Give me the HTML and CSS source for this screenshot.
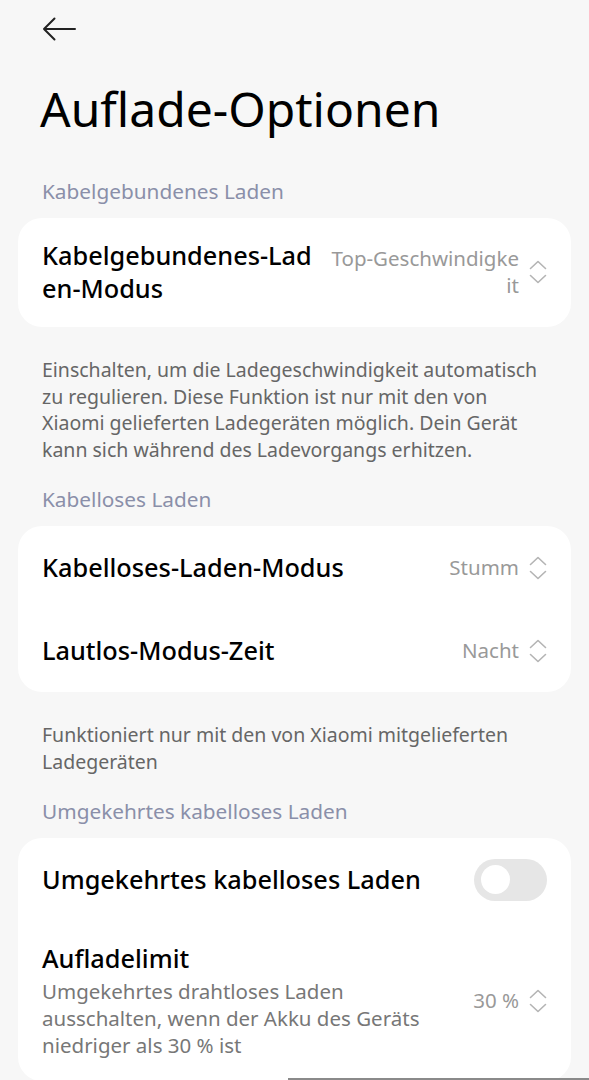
FILE: index.html
```html
<!DOCTYPE html>
<html lang="de">
<head>
    <meta charset="UTF-8">
    <meta name="viewport" content="width=device-width, initial-scale=1.0">
    <title>Auflade-Optionen</title>
    <link rel="stylesheet" href="styles.css">
</head>
<body>
    <div class="page">
        <div class="topbar">
            <svg class="back" width="34" height="24" viewBox="0 0 34 24">
                <path d="M33 12 H2 M12.5 1.5 L2 12 L12.5 22.5" fill="none" stroke="#222" stroke-width="2" stroke-linecap="round" stroke-linejoin="round"/>
            </svg>
        </div>
        <h1 class="title">Auflade-Optionen</h1>

        <div class="group-label">Kabelgebundenes Laden</div>
        <div class="card">
            <div class="row row-multi">
                <div class="row-title">Kabelgebundenes-Lad<br>en-Modus</div>
                <div class="row-value">
                    <span>Top-Geschwindigke<br>it</span>
                    <svg class="updown" width="18" height="24" viewBox="0 0 18 24"><path d="M1.5 8.5 L9 1.5 L16.5 8.5 M1.5 15.5 L9 22.5 L16.5 15.5" fill="none" stroke="#b4b4b4" stroke-width="1.6" stroke-linecap="round" stroke-linejoin="round"/></svg>
                </div>
            </div>
        </div>
        <p class="note">Einschalten, um die Ladegeschwindigkeit automatisch zu regulieren. Diese Funktion ist nur mit den von Xiaomi gelieferten Ladegeräten möglich. Dein Gerät kann sich während des Ladevorgangs erhitzen.</p>

        <div class="group-label after-note">Kabelloses Laden</div>
        <div class="card">
            <div class="row">
                <div class="row-title">Kabelloses-Laden-Modus</div>
                <div class="row-value">
                    <span>Stumm</span>
                    <svg class="updown" width="18" height="24" viewBox="0 0 18 24"><path d="M1.5 8.5 L9 1.5 L16.5 8.5 M1.5 15.5 L9 22.5 L16.5 15.5" fill="none" stroke="#b4b4b4" stroke-width="1.6" stroke-linecap="round" stroke-linejoin="round"/></svg>
                </div>
            </div>
            <div class="row">
                <div class="row-title">Lautlos-Modus-Zeit</div>
                <div class="row-value">
                    <span>Nacht</span>
                    <svg class="updown" width="18" height="24" viewBox="0 0 18 24"><path d="M1.5 8.5 L9 1.5 L16.5 8.5 M1.5 15.5 L9 22.5 L16.5 15.5" fill="none" stroke="#b4b4b4" stroke-width="1.6" stroke-linecap="round" stroke-linejoin="round"/></svg>
                </div>
            </div>
        </div>
        <p class="note">Funktioniert nur mit den von Xiaomi mitgelieferten Ladegeräten</p>

        <div class="group-label after-note">Umgekehrtes kabelloses Laden</div>
        <div class="card">
            <div class="row">
                <div class="row-title">Umgekehrtes kabelloses Laden</div>
                <div class="switch"><div class="knob"></div></div>
            </div>
            <div class="row row-multi">
                <div class="row-text">
                    <div class="row-title">Aufladelimit</div>
                    <div class="row-sub">Umgekehrtes drahtloses Laden ausschalten, wenn der Akku des Geräts niedriger als 30 % ist</div>
                </div>
                <div class="row-value">
                    <span>30 %</span>
                    <svg class="updown" width="18" height="24" viewBox="0 0 18 24"><path d="M1.5 8.5 L9 1.5 L16.5 8.5 M1.5 15.5 L9 22.5 L16.5 15.5" fill="none" stroke="#b4b4b4" stroke-width="1.6" stroke-linecap="round" stroke-linejoin="round"/></svg>
                </div>
            </div>
        </div>
    </div>
    <div class="home-line"></div>
</body>
</html>
```

FILE: styles.css
```css
body {
    margin: 0;
    background-color: #f7f7f7;
    font-family: "Noto Sans", Roboto, sans-serif;
    color: #000;
    height: 1080px;
    overflow: hidden;
}

.page {
    padding: 0 18px;
}

.topbar {
    height: 58px;
    display: flex;
    align-items: center;
    padding-left: 24px;
}

.title {
    margin: 21px 0 0 22px;
    font-size: 48px;
    line-height: 60px;
    font-weight: 400;
}

.group-label {
    margin: 39px 0 14px 24px;
    font-size: 20.8px;
    line-height: 26px;
    color: #8a8fa9;
}

.group-label.after-note {
    margin-top: 23px;
}

.card {
    background-color: #fff;
    border-radius: 24px;
}

.row {
    display: flex;
    align-items: center;
    justify-content: space-between;
    gap: 16px;
    min-height: 83px;
    padding: 0 24px;
}

.row-multi {
    padding: 21px 24px 22px;
    min-height: 0;
}

.row-title {
    font-size: 25.3px;
    line-height: 33px;
    font-weight: 500;
}

.row-text {
    max-width: 395px;
}

.row-sub {
    font-size: 20.5px;
    line-height: 27px;
    color: #777;
    margin-top: 3px;
}

.row-value {
    display: flex;
    align-items: center;
    gap: 10px;
    font-size: 20.5px;
    line-height: 27px;
    color: #999;
    text-align: right;
    flex-shrink: 0;
}

.note {
    margin: 30px 24px 0;
    font-size: 19.5px;
    line-height: 26.5px;
    color: #666;
}

.switch {
    width: 73px;
    height: 42px;
    border-radius: 21px;
    background-color: #e6e6e6;
    display: flex;
    align-items: center;
    padding-left: 7px;
    box-sizing: border-box;
}

.knob {
    width: 29px;
    height: 29px;
    border-radius: 50%;
    background-color: #fff;
}

.home-line {
    position: fixed;
    left: 288px;
    right: 0;
    bottom: 0;
    height: 2px;
    background-color: #8a8a8a;
}
```
